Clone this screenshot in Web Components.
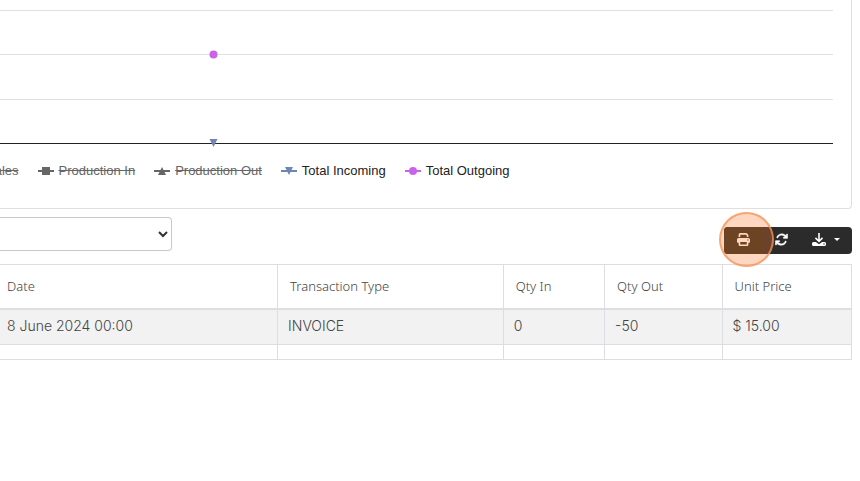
<!DOCTYPE html>
<html lang="en">
<head>
<meta charset="utf-8">
<title>Stock transactions</title>
<style>
  body { margin: 0; background: #fff; font-family: "Liberation Sans", Arial, sans-serif; }
</style>
</head>
<body>
<report-page></report-page>

<template id="report-page">
  <style>
    :host { display: block; padding-right: 8px; overflow-x: hidden; }
    .controls { display: flex; justify-content: space-between; align-items: flex-end; padding: 8px 0 10px; }
    filter-select { margin-bottom: 3px; }
  </style>
  <chart-card>
    <legend-item off>Sales</legend-item>
    <legend-item off shape="square">Production In</legend-item>
    <legend-item off shape="up">Production Out</legend-item>
    <legend-item shape="down">Total Incoming</legend-item>
    <legend-item shape="circle">Total Outgoing</legend-item>
  </chart-card>
  <div class="controls">
    <filter-select></filter-select>
    <tool-bar></tool-bar>
  </div>
  <transaction-table></transaction-table>
</template>

<template id="chart-card">
  <style>
    :host { display: block; box-sizing: border-box; border: solid #dfdfdf; border-width: 0 1px 1px 0; border-bottom-right-radius: 4px; padding: 0 18px 28px 0; }
    svg { display: block; width: 100%; height: 150px; }
    .grid { stroke: #e0e0e0; }
    .axis { stroke: #222; }
    .legend { display: flex; gap: 19px; margin-left: -35px; padding-top: 12px; }
  </style>
  <svg role="img" aria-label="Stock movement chart">
    <g shape-rendering="crispEdges">
      <line class="grid" x1="0" x2="100%" y1="10.5" y2="10.5"/>
      <line class="grid" x1="0" x2="100%" y1="54.5" y2="54.5"/>
      <line class="grid" x1="0" x2="100%" y1="99.5" y2="99.5"/>
      <line class="axis" x1="0" x2="100%" y1="143.5" y2="143.5"/>
    </g>
    <circle cx="213.5" cy="54.5" r="4" fill="#c963e8"/>
    <path d="M209.5 139h8l-4 8z" fill="#6f86b5"/>
  </svg>
  <div class="legend"><slot></slot></div>
</template>

<template id="legend-item">
  <style>
    :host { display: inline-flex; align-items: center; gap: 5px; color: #222; font-size: 13px; line-height: 18px; white-space: nowrap; --mark: #666; }
    :host([off]) { color: #666; }
    :host([off]) span { text-decoration: line-through; }
    :host([shape="down"]) { --mark: #6f86b5; }
    :host([shape="circle"]) { --mark: #c963e8; }
    svg { width: 16px; height: 10px; flex: none; fill: var(--mark); stroke: none; }
  </style>
  <svg viewBox="0 0 16 10" aria-hidden="true"><path d="M0 4h16v2H0z"/><path class="mark"/></svg>
  <span><slot></slot></span>
</template>

<template id="filter-select">
  <style>
    :host { display: block; width: 20%; min-width: 172px; }
    select { display: block; width: 100%; height: 34px; border: 1px solid #c9c9c9; border-left: 0; border-radius: 0 4px 4px 0; background: #fff; color: #333; font: 13px "Liberation Sans", Arial, sans-serif; }
  </style>
  <select aria-label="Filter"><option></option></select>
</template>

<template id="tool-bar">
  <style>
    :host { display: flex; position: relative; border-radius: 4px; background: #2b2b2b; }
    button { display: flex; align-items: center; justify-content: center; gap: 8px; height: 27px; border: 0; padding: 0 12px 2px; background: none; color: #fff; }
    button:first-of-type { background: #2d2d1f; border-radius: 4px 0 0 4px; padding: 0 13px 2px; }
    svg { display: block; fill: currentColor; }
    .pulse { position: absolute; left: -5px; top: -15px; width: 51px; height: 51px; border: 2px solid rgba(243,148,92,.75); border-radius: 50%; background: rgba(255,121,48,.3); pointer-events: none; }
  </style>
  <button aria-label="Print"><svg width="13" height="13" viewBox="0 0 512 512"><path d="M128 0C93 0 64 29 64 64v96h64V64h227l29 29v67h64V93c0-17-7-33-19-45L400 19C388 7 372 0 355 0H128zM384 352v96H128V352h256zm64 32h32c18 0 32-14 32-32V256c0-35-29-64-64-64H64c-35 0-64 29-64 64v96c0 18 14 32 32 32h32v64c0 35 29 64 64 64h256c35 0 64-29 64-64V384zM432 248a24 24 0 1 1 0 48 24 24 0 1 1 0-48z"/></svg></button>
  <button aria-label="Refresh"><svg width="13" height="13" viewBox="0 0 512 512"><path d="M105 203c9-24 23-46 41-65 62-62 163-62 226 0l17 18h-61v56h154a20 20 0 0 0 20-20V40h-56v70l-18-17C341 6 201 6 113 93c-24 25-42 54-53 85l45 25zM407 309c-9 24-23 46-41 65-62 62-163 62-226 0l-17-18h61v-56H30a20 20 0 0 0-20 20v152h56v-70l18 17c87 87 227 87 315 0 24-25 42-54 53-85l-45-25z" stroke="#fff" stroke-width="12"/></svg></button>
  <button aria-label="Export" aria-haspopup="true"><svg width="14" height="13" viewBox="0 0 14 13"><path d="M6.200 0h1.600v6.400l2.200-2.100 1.100 1.100L7 9.400 2.900 5.400 4 4.300l2.200 2.100zM1.500 9h2.300L7 11.300 10.200 9h2.300A1.500 1.500 0 0 1 14 10.500v1a1.500 1.500 0 0 1-1.500 1.500h-11A1.500 1.500 0 0 1 0 11.500v-1A1.500 1.500 0 0 1 1.500 9z"/><circle cx="12" cy="11" r=".7" fill="#2b2b2b"/></svg><svg width="6" height="3" viewBox="0 0 6 3"><path d="M0 0h6L3 3z"/></svg></button>
  <span class="pulse"></span>
</template>

<template id="transaction-table">
  <style>
    :host { display: block; }
    table { width: 100%; border-collapse: collapse; table-layout: fixed; color: #444; font: 300 14px/20px Inter, sans-serif; }
    th, td { border: 1px solid #dcdee1; text-align: left; vertical-align: middle; padding: 0 10px 2px; }
    th:first-child, td:first-child { border-left: 0; padding-left: 7px; }
    th { height: 41px; padding: 0 12px 2px; border-bottom: 2px solid #dcdee1; font: 300 13px/20px "Noto Sans", sans-serif; }
    tbody td { height: 32px; }
    tbody tr:first-child { background: #f2f2f2; }
    tbody tr.blank td { height: 12px; }
  </style>
  <table>
    <colgroup><col style="width:32.6%"><col style="width:26.5%"><col style="width:11.9%"><col style="width:13.8%"><col></colgroup>
    <thead><tr><th scope="col">Date</th><th scope="col">Transaction Type</th><th scope="col">Qty In</th><th scope="col">Qty Out</th><th scope="col">Unit Price</th></tr></thead>
    <tbody>
      <tr><td>8 June 2024 00:00</td><td>INVOICE</td><td>0</td><td>-50</td><td>$ 15.00</td></tr>
      <tr class="blank"><td></td><td></td><td></td><td></td><td></td></tr>
    </tbody>
  </table>
</template>

<script>
  class TemplateElement extends HTMLElement {
    constructor() {
      super();
      this.attachShadow({ mode: 'open' })
        .append(document.getElementById(this.localName).content.cloneNode(true));
    }
  }
  const MARKS = {
    square: 'M4 1h8v8H4z',
    up: 'M8 1l4 8H4z',
    down: 'M4 1h8l-4 8z',
    circle: 'M8 1a4 4 0 1 1 0 8 4 4 0 0 1 0-8z'
  };
  class LegendItem extends TemplateElement {
    connectedCallback() {
      this.shadowRoot.querySelector('.mark').setAttribute('d', MARKS[this.getAttribute('shape')] || '');
    }
  }
  customElements.define('legend-item', LegendItem);
  for (const name of ['chart-card', 'filter-select', 'tool-bar', 'transaction-table', 'report-page'])
    customElements.define(name, class extends TemplateElement {});
</script>
</body>
</html>
